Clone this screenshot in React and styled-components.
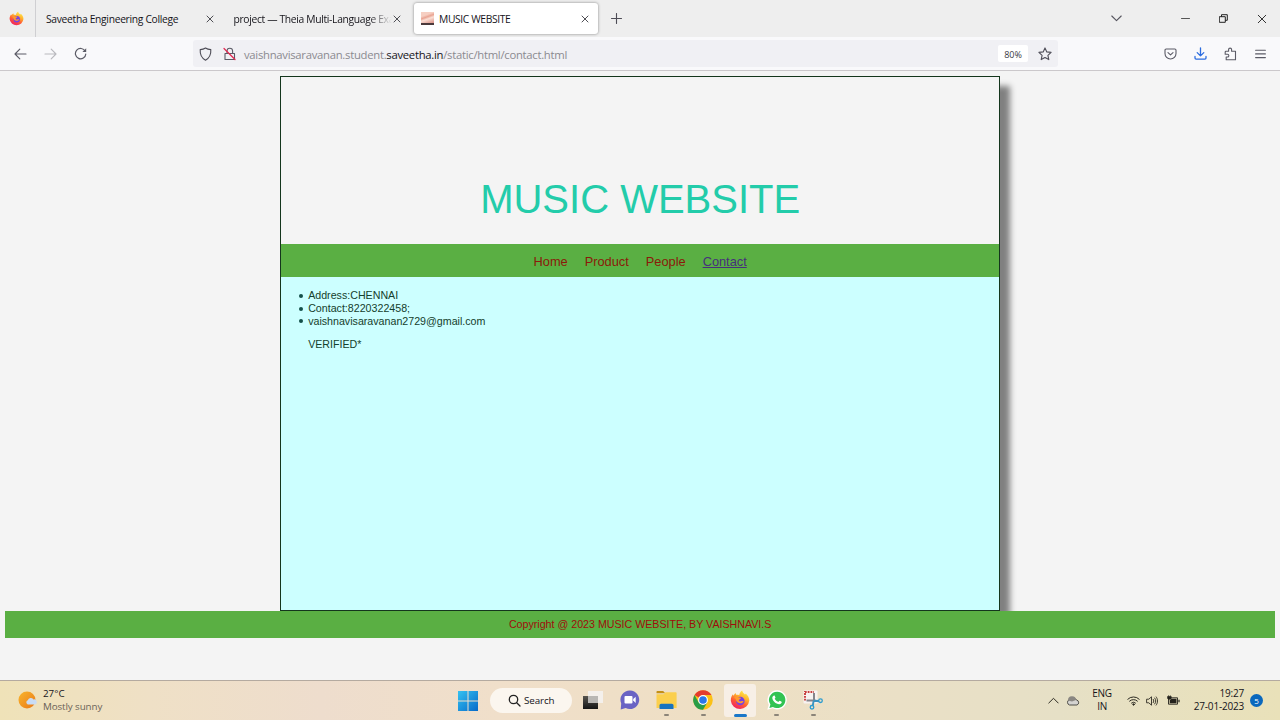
import React from "react";
import styled, { createGlobalStyle, css } from "styled-components";

const Global = createGlobalStyle`
  *, *::before, *::after { box-sizing: border-box; }
  html, body { margin: 0; padding: 0; overflow: hidden; }
  body { background: #f4f4f4; }
  svg { display: block; flex: none; }
`;

const Screen = styled.div`
  width: 1280px;
  height: 720px;
  display: flex;
  flex-direction: column;
  overflow: hidden;
  background: #f4f4f4;
  font-family: "Open Sans", "Noto Sans", sans-serif;
  color: #15141a;
`;

/* ---------- browser chrome ---------- */
const TabStrip = styled.div`
  height: 37px;
  flex: none;
  display: flex;
  align-items: center;
  background: #eeeeee;
`;

const PinnedTab = styled.div`
  width: 36px;
  height: 37px;
  display: flex;
  align-items: center;
  padding-left: 9px;
  border-right: 1px solid #cfcfd2;
`;

const Tab = styled.div`
  width: ${(p) => p.$w}px;
  height: 31px;
  display: flex;
  align-items: center;
  padding: 0 9px 0 ${(p) => p.$pad}px;
  ${(p) =>
    p.$active &&
    css`
      background: #fff;
      border-radius: 3px;
      box-shadow: 0 0 3px rgba(0, 0, 0, 0.45);
    `}
`;

const TabTitle = styled.span`
  flex: 1;
  min-width: 0;
  white-space: nowrap;
  font-size: 10.3px;
  line-height: 16px;
  letter-spacing: ${(p) => p.$ls || 0}px;
  ${(p) =>
    p.$fade &&
    css`
      mask-image: linear-gradient(to right, #000 calc(100% - 24px), transparent calc(100% - 1px));
    `}
`;

const Thumb = styled.span`
  width: 13px;
  height: 13px;
  margin-right: 5px;
  border-bottom: 2px solid #4a3a3c;
  background: linear-gradient(160deg, #f6cfc2 0 30%, #e9a493 45%, #fbe0d6 60%, #d98f84);
`;

const Spacer = styled.span`
  flex: ${(p) => (p.$w ? "none" : 1)};
  width: ${(p) => p.$w || 0}px;
`;

const Toolbar = styled.div`
  height: 34px;
  flex: none;
  display: flex;
  align-items: center;
  background: #f9f9fb;
  border-bottom: 1px solid #cbc8cb;
`;

const UrlBar = styled.div`
  width: 865px;
  height: 27px;
  display: flex;
  align-items: center;
  padding: 0 6px;
  border-radius: 3px;
  background: #f0f0f4;
`;

const Address = styled.span`
  flex: 1;
  margin-left: 8px;
  padding-top: 2px;
  font-size: 11.3px;
  line-height: 18px;
  letter-spacing: -0.28px;
  white-space: nowrap;
  color: #8b8a90;
  b { font-weight: 400; color: #15141a; }
`;

const Zoom = styled.span`
  width: 30px;
  height: 17px;
  margin-right: 10px;
  border-radius: 2px;
  background: #fff;
  font-size: 9px;
  line-height: 19px;
  text-align: center;
  color: #3a3944;
`;

/* ---------- web page ---------- */
const Viewport = styled.div`
  height: 609px;
  flex: none;
  padding: 5px 5px 0 5.3px;
  background: #f4f4f4;
  font-family: "Liberation Sans", Arial, sans-serif;
`;

const Container = styled.div`
  width: 720px;
  height: 535px;
  margin: 0 auto;
  border: 1px solid #14361c;
  box-shadow: 10px 10px 6px #808080;
  background: #f4f4f4;
  display: flex;
  flex-direction: column;
`;

const Banner = styled.header`
  height: 166.5px;
  flex: none;
  display: flex;
  align-items: flex-end;
  justify-content: center;
  padding-bottom: 21.5px;
  font-size: 40px;
  line-height: 46px;
  color: #23ccaa;
`;

const Menu = styled.nav`
  height: 33.5px;
  flex: none;
  display: flex;
  align-items: center;
  justify-content: center;
  gap: 17px;
  padding-top: 3px;
  background: #5aaf43;
`;

const MenuLink = styled.a`
  font-size: 12.8px;
  line-height: 16px;
  color: ${(p) => (p.$current ? "#46307c" : "#8b1a0a")};
  text-decoration: ${(p) => (p.$current ? "underline" : "none")};
`;

const Content = styled.main`
  flex: 1;
  padding: 12px 0 0 27px;
  background: #ccffff;
  color: #14402c;
  font-size: 10.67px;
  line-height: 12.8px;
`;

const Details = styled.ul`
  margin: 0;
  padding: 0;
  list-style: none;
`;

const Detail = styled.li`
  display: flex;
  align-items: center;
  &::before {
    content: "";
    width: 4px;
    height: 4px;
    margin: 1px 5px 0 -9px;
    border-radius: 50%;
    background: #14504a;
  }
`;

const Verified = styled.p`
  margin: 10.5px 0 0;
`;

const Footer = styled.footer`
  position: relative;
  height: 26.5px;
  background: #5aaf43;
  color: #a00c0c;
  font-size: 10.67px;
  line-height: 26px;
  text-align: center;
`;

/* ---------- taskbar ---------- */
const Taskbar = styled.div`
  height: 40px;
  flex: none;
  display: flex;
  align-items: center;
  border-top: 1px solid #b4aaa0;
  background: linear-gradient(
    to right,
    #efe2b8 0,
    #efe0c6 150px,
    #eeddcd 320px,
    #f0dfca 500px,
    #eedfc4 720px,
    #ebe0c6 860px,
    #e6e0c6 1060px,
    #e9e1b9 1280px
  );
  font-size: 10px;
`;

const Weather = styled.div`
  width: 458px;
  display: flex;
  align-items: center;
  gap: 5px;
  padding-left: 18px;
`;

const Lines = styled.div`
  display: flex;
  flex-direction: column;
  align-items: ${(p) => p.$align || "flex-start"};
  margin-top: -1px;
  line-height: 13px;
  font-size: ${(p) => p.$size || 10}px;
  letter-spacing: ${(p) => p.$ls || 0}px;
  white-space: nowrap;
`;

const Muted = styled.span`
  color: #6a6258;
  letter-spacing: -0.1px;
`;

const SearchPill = styled.div`
  width: 82px;
  height: 25px;
  margin: 0 3px 0 12px;
  padding-left: 18px;
  display: flex;
  align-items: center;
  gap: 3px;
  border-radius: 13px;
  background: #fbf6ef;
  font-size: 9.8px;
  letter-spacing: -0.1px;
`;

const TaskApp = styled.div`
  width: 36.7px;
  height: 34px;
  display: flex;
  flex-direction: column;
  align-items: center;
  padding-top: 6px;
  position: relative;
`;

const ActiveApp = styled(TaskApp)`
  width: 32px;
  height: 33px;
  margin: 0 2.3px;
  border-radius: 3px;
  background: #f7efe6;
`;

const Marker = styled.span`
  position: absolute;
  bottom: ${(p) => (p.$on ? 0.5 : 1.5)}px;
  width: ${(p) => (p.$on ? 13 : 5)}px;
  height: 2.4px;
  border-radius: 2px;
  background: ${(p) => (p.$on ? "#1a77c9" : "#8b8478")};
`;

const Tray = styled.div`
  flex: 1;
  display: flex;
  align-items: center;
  justify-content: flex-end;
  padding-right: 17px;
`;

const Badge = styled.span`
  width: 13px;
  height: 13px;
  margin-left: 6px;
  border-radius: 50%;
  background: #0a68bd;
  color: #fff;
  font-size: 8px;
  line-height: 13px;
  text-align: center;
`;

/* ---------- icons ---------- */
const Line = ({ w, h, vb, c = "#5b5b66", s = 1.1, children }) => (
  <svg width={w} height={h} viewBox={vb || `0 0 ${w} ${h}`} fill="none" stroke={c} strokeWidth={s} strokeLinecap="round" strokeLinejoin="round">
    {children}
  </svg>
);

const Close = ({ size = 8, c = "#3b3b42", s = 0.9 }) => (
  <Line w={size} h={size} vb="0 0 8 8" c={c} s={s}>
    <path d="M1 1l6 6M7 1l-6 6" />
  </Line>
);

const Firefox = ({ size, id }) => (
  <svg width={size} height={size} viewBox="0 0 20 20">
    <defs>
      <linearGradient id={id} x1="0.8" y1="0.05" x2="0.3" y2="1">
        <stop offset="0" stopColor="#fff04f" />
        <stop offset="0.35" stopColor="#ffb02e" />
        <stop offset="0.65" stopColor="#ff5a36" />
        <stop offset="1" stopColor="#ee1d65" />
      </linearGradient>
    </defs>
    <path d="M12.2 0.6c.2 2 1.5 2.800 2.700 3.900.6-.1 .8-.6.8-1 2 1.700 3.600 4.200 3.600 7.100A9.300 9.300 0 0 1 .8 10.700C.7 7.700 1.900 5.500 3 4.300c0 .6.1 1.100.4 1.500C4 4.500 4.700 3.600 5.800 2.900c0 .8.2 1.500.7 2 1.200-.1 2 .1 2.700.4C9.500 3.400 10.600 1.500 12.200.6z" fill={`url(#${id})`} />
    <circle cx="10.300" cy="11" r="4.300" fill="#7542e5" />
    <path d="M4 7.500c1.500-1.200 3.500-1 5.200-.1 1 .1 1.800.1 1.900.6-.2.900-1.800 1-2.200 2-.1 1 .9 1.700 2.200 1.300 1-.3 1.700-.5 2.500.1-1 1.600-2.700 2.200-4.400 1.700-2.200-.5-3.500-2.300-3.300-4z" fill="#ff9a2c" />
  </svg>
);

const Back = ({ c, flip }) => (
  <Line w={13} h={12} c={c} s={1.15}>
    <path d={flip ? "M1 6h11M7.200 1.200L12 6l-4.800 4.800" : "M12 6H1M5.800 1.200L1 6l4.800 4.800"} />
  </Line>
);

const Reload = () => (
  <Line w={13} h={13} s={1.2}>
    <path d="M11.200 4.200A5.200 5.200 0 1 0 11.800 7" />
    <path d="M12.200 1.200v3.800H8.400z" fill="#5b5b66" stroke="none" />
  </Line>
);

const Shield = () => (
  <Line w={13} h={14} c="#4d4c56">
    <path d="M6.500 1c1.500 1 3.500 1.500 5.300 1.600.3 4.500-.8 8.100-5.300 10.600C2 10.700.9 7.100 1.200 2.600 3 2.500 5 2 6.500 1z" />
  </Line>
);

const Lock = () => (
  <Line w={13} h={14} c="#5b5b66">
    <path d="M2 6.500h9.500v6H2zM4 6.500V4a2.800 2.800 0 0 1 5.600 0v2.500" />
    <path d="M1 1.500l11 11" stroke="#e22850" strokeWidth="1.200" />
  </Line>
);

const Star = () => (
  <Line w={14} h={14} c="#4f4e58">
    <path d="M7 .9l1.800 4 4.300.5-3.200 2.900.9 4.300L7 10.500l-3.800 2.100.9-4.300L.9 5.400l4.300-.5z" />
  </Line>
);

const Pocket = () => (
  <Line w={13} h={12}>
    <path d="M2.200 1h8.600c.8 0 1.200.5 1.200 1.200v3.300a5.500 5.500 0 0 1-11 0V2.200C1 1.500 1.400 1 2.200 1z" />
    <path d="M4 4.600l2.500 2.300L9 4.600" />
  </Line>
);

const Download = () => (
  <Line w={13} h={13} c="#2b6cdf" s={1.3}>
    <path d="M6.500 .8v8M3.200 5.600l3.300 3.300 3.300-3.300M1 9.500v1.600c0 .7.400 1.100 1.100 1.100h8.800c.7 0 1.100-.4 1.100-1.100V9.500" />
  </Line>
);

const Puzzle = () => (
  <Line w={13} h={14}>
    <path d="M2 4.200h2.600V2.600a1.500 1.500 0 0 1 3 0v1.600h3.900v8.600H2.200V10h1.300a1.300 1.300 0 0 0 0-2.700H1.200V5c0-.5.300-.8.800-.8z" />
  </Line>
);

const WindowsLogo = () => (
  <svg width="20" height="20" viewBox="0 0 20 20">
    <defs>
      <linearGradient id="win" x1="0" y1="0" x2="1" y2="1">
        <stop offset="0" stopColor="#35c2f1" />
        <stop offset="1" stopColor="#0669c9" />
      </linearGradient>
    </defs>
    <path d="M0 0h9.500v9.500H0zM10.500 0H20v9.500h-9.500zM0 10.500h9.500V20H0zM10.500 10.500H20V20h-9.500z" fill="url(#win)" />
  </svg>
);

const TaskView = () => (
  <svg width="20" height="20" viewBox="0 0 20 20">
    <defs>
      <linearGradient id="tv" x1="0" y1="0" x2="0" y2="1">
        <stop offset="0" stopColor="#57544f" />
        <stop offset="1" stopColor="#151515" />
      </linearGradient>
    </defs>
    <path d="M0 6h15v13H0z" fill="url(#tv)" />
    <path d="M5 1h15v12H5z" fill="#f4f3f2" fillOpacity="0.85" />
    <path d="M5 6h10v7H5z" fill="#b9b7b4" />
  </svg>
);

const Chat = () => (
  <svg width="20" height="20" viewBox="0 0 20 20">
    <path d="M10.200.5a9.300 9.300 0 1 1-4.500 17.600L.7 19.500l.5-6A9.300 9.300 0 0 1 10.200.5z" fill="#6a63c4" />
    <rect x="4.500" y="6" width="8" height="7.500" rx="1" fill="#fff" />
    <path d="M13.200 9l2.500-2.300v6.200L13.200 10.500z" fill="#fff" />
  </svg>
);

const Folder = () => (
  <svg width="21" height="20" viewBox="0 0 21 20">
    <path d="M.5 2c0-.6.4-1 1-1h5.700l2 2.200H.5z" fill="#c48f15" />
    <path d="M.5 4.200h7.200L9.600 2.300h10.200c.5 0 .8.300.8.800v15H.5z" fill="#fbcf4d" />
    <path d="M3.500 19v-3.500c0-1 .7-1.700 1.700-1.700h10.600c1 0 1.700.7 1.700 1.700V19z" fill="#1873bf" />
  </svg>
);

const Chrome = () => (
  <svg width="20" height="20" viewBox="0 0 20 20">
    <circle cx="10" cy="10" r="9.800" fill="#fbc116" />
    <path d="M10 10L1.500 5.100A9.800 9.800 0 0 1 18.500 5.100H10z" fill="#e33b2e" />
    <path d="M1.500 5.100A9.800 9.800 0 0 0 10 19.800L14.300 12.500 10 10 5.700 12.400z" fill="#2a9d48" />
    <circle cx="10" cy="10" r="4.900" fill="#fff" />
    <circle cx="10" cy="10" r="3.800" fill="#2b76e8" />
  </svg>
);

const WhatsApp = () => (
  <svg width="20" height="20" viewBox="0 0 20 20">
    <path d="M10.200.3a9.600 9.600 0 1 1-4.700 18L.3 19.700l1.500-5A9.600 9.600 0 0 1 10.200.3z" fill="#fff" />
    <path d="M10.200 1.700a8.200 8.200 0 1 1-4.300 15.200l-3.500 1 1-3.400A8.200 8.200 0 0 1 10.200 1.700z" fill="#32c353" />
    <path d="M7.200 5.400c.4 0 .6.200 1.300 2.100 0 .4-.4.8-.8 1.300.8 1.500 2 2.500 3.600 3.200.5-.4.900-1.100 1.300-1.200.5 0 2.200.9 2.200 1.200 0 1.200-1.200 2.200-2.500 2.200-3.400-.1-7.100-3.700-7-6.500.1-1.300 1-2.300 1.900-2.300z" fill="#fff" />
  </svg>
);

const Snip = () => (
  <svg width="20" height="20" viewBox="0 0 20 20" fill="none">
    <rect x=".5" y=".5" width="14" height="13" rx="1" fill="#f7f2f1" />
    <path d="M2 10.500V2h9" stroke="#c83d3d" strokeWidth="1.900" strokeDasharray="1.800 1" />
    <path d="M11 3v8M3.500 10.600h9" stroke="#85858c" strokeWidth="2" />
    <path d="M10.700 10.500l-.9 5M11 10.700l5 .3" stroke="#3c93bf" strokeWidth="1.900" />
    <circle cx="9" cy="17.300" r="1.800" stroke="#2b9bcf" strokeWidth="1.300" />
    <circle cx="17.500" cy="10.700" r="1.800" stroke="#2b9bcf" strokeWidth="1.300" />
  </svg>
);

const Sun = () => (
  <svg width="20" height="20" viewBox="0 0 20 20">
    <defs>
      <linearGradient id="sun" x1="0" y1="0" x2="1" y2="1">
        <stop offset="0" stopColor="#f9b62c" />
        <stop offset="1" stopColor="#e97818" />
      </linearGradient>
    </defs>
    <circle cx="9" cy="9" r="8.500" fill="url(#sun)" />
    <path d="M9.800 13.500a2.300 2.300 0 0 1 0-4.300 3.100 3.100 0 0 1 5.600-.7 2.500 2.500 0 1 1 1.500 5z" fill="#c9dcf5" />
  </svg>
);

const Wifi = () => (
  <Line w={13} h={11} c="#2c2a22" s={1}>
    <path d="M.8 4.200a8 8 0 0 1 11.400 0M2.600 6.100a5.500 5.500 0 0 1 7.800 0M4.500 8a3 3 0 0 1 4 0" />
    <circle cx="6.500" cy="9.500" r=".7" fill="#2c2a22" />
  </Line>
);

const Volume = () => (
  <Line w={12} h={12} c="#2c2a22" s={0.9}>
    <path d="M1 4.200h1.800L5.500 1.800v8.400L2.800 7.800H1zM7.200 4.300c.8 1 .8 2.400 0 3.400M8.700 3c1.400 1.800 1.400 4.200 0 6M10.200 1.900c1.800 2.400 1.800 5.800 0 8.200" />
  </Line>
);

const Battery = () => (
  <svg width="13" height="12" viewBox="0 0 13 12">
    <path d="M1.500 2.800h9v6.400h-9z" fill="none" stroke="#24221c" strokeWidth=".9" />
    <path d="M2.700 7V5l2-1.200h4.800v4.400H2.700z" fill="#24221c" />
    <path d="M12 4.800v2.500" stroke="#24221c" strokeWidth="1.200" />
    <path d="M.6 1.500h3.600v1.700c0 1.500-3.600 1.500-3.600 0zM1.500 .3v1.400M3.300 .3v1.400" fill="#24221c" stroke="#24221c" strokeWidth=".7" />
  </svg>
);

const Cloud = () => (
  <svg width="14" height="10" viewBox="0 0 14 10">
    <path d="M3.500 9a2.800 2.800 0 0 1-.2-5.300 4 4 0 0 1 7.100.3A2.600 2.600 0 0 1 11 9z" fill="#d4d3d0" stroke="#403e3a" strokeWidth=".9" />
    <path d="M2 4.500a4 4 0 0 1 8-.5L6 5.500z" fill="#8a8782" />
  </svg>
);

const links = ["Home", "Product", "People", "Contact"];
const details = ["Address:CHENNAI", "Contact:8220322458;", "vaishnavisaravanan2729@gmail.com"];

export default function App() {
  return (
    <Screen>
      <Global />
      <TabStrip>
        <PinnedTab><Firefox size={15} id="ff-tab" /></PinnedTab>
        <Tab $w={187} $pad={10}>
          <TabTitle $ls={-0.31}>Saveetha Engineering College</TabTitle>
          <Close />
        </Tab>
        <Tab $w={187} $pad={10.5}>
          <TabTitle $fade $ls={-0.33}>project — Theia Multi-Language Exa</TabTitle>
          <Close />
        </Tab>
        <Spacer $w={4} />
        <Tab $w={184} $pad={7} $active>
          <Thumb />
          <TabTitle $ls={-0.38}>MUSIC WEBSITE</TabTitle>
          <Close />
        </Tab>
        <Spacer $w={13} />
        <Line w={11} h={11} c="#4d4c56" s={1.1}><path d="M5.500 .5v10M.5 5.500h10" /></Line>
        <Spacer />
        <Line w={11} h={7} c="#55545e"><path d="M.8 1l4.700 4.600L10.200 1" /></Line>
        <Spacer $w={59} />
        <Line w={9} h={3} c="#555" s={1}><path d="M.5 1.500h8" /></Line>
        <Spacer $w={29} />
        <Line w={9} h={9} c="#222" s={1}><path d="M.7 2.700h5.600v5.600H.7zM2.500 2.500V.7h5.800v5.600H6.500" /></Line>
        <Spacer $w={28.5} />
        <Close size={10} c="#333" s={0.8} />
        <Spacer $w={13.5} />
      </TabStrip>

      <Toolbar>
        <Spacer $w={13.5} />
        <Back c="#5b5b66" />
        <Spacer $w={17} />
        <Back c="#b9b9be" flip />
        <Spacer $w={17} />
        <Reload />
        <Spacer />
        <UrlBar>
          <Shield />
          <Spacer $w={11} />
          <Lock />
          <Address>vaishnavisaravanan.student.<b>saveetha.in</b>/static/html/contact.html</Address>
          <Zoom>80%</Zoom>
          <Star />
        </UrlBar>
        <Spacer $w={105.5} />
        <Pocket />
        <Spacer $w={17} />
        <Download />
        <Spacer $w={17.5} />
        <Puzzle />
        <Spacer $w={18} />
        <Line w={11} h={10}><path d="M.6 1.200h9.800M.6 4.900h9.800M.6 8.600h9.800" /></Line>
        <Spacer $w={14} />
      </Toolbar>

      <Viewport>
        <Container>
          <Banner>MUSIC WEBSITE</Banner>
          <Menu>
            {links.map((l) => (
              <MenuLink key={l} $current={l === "Contact"}>{l}</MenuLink>
            ))}
          </Menu>
          <Content>
            <Details>
              {details.map((d) => <Detail key={d}>{d}</Detail>)}
            </Details>
            <Verified>VERIFIED*</Verified>
          </Content>
        </Container>
        <Footer>Copyright @ 2023 MUSIC WEBSITE, BY VAISHNAVI.S</Footer>
      </Viewport>

      <Taskbar>
        <Weather>
          <Sun />
          <Lines $size={9.8}>
            <span>27°C</span>
            <Muted>Mostly sunny</Muted>
          </Lines>
        </Weather>
        <WindowsLogo />
        <SearchPill>
          <Line w={13} h={13} c="#222" s={1.3}><circle cx="5.500" cy="5.500" r="4.200" /><path d="M8.700 8.700l3.300 3.300" /></Line>
          Search
        </SearchPill>
        <TaskApp><TaskView /></TaskApp>
        <TaskApp><Chat /></TaskApp>
        <TaskApp><Folder /><Marker /></TaskApp>
        <TaskApp><Chrome /><Marker /></TaskApp>
        <ActiveApp><Firefox size={20} id="ff-task" /><Marker $on /></ActiveApp>
        <TaskApp><WhatsApp /><Marker /></TaskApp>
        <TaskApp><Snip /><Marker /></TaskApp>
        <Tray>
          <Line w={11} h={7} c="#2c2a22" s={1}><path d="M.8 6l4.700-4.700L10.200 6" /></Line>
          <Spacer $w={7.5} />
          <Cloud />
          <Spacer $w={12} />
          <Lines $align="center" $ls={-0.3}><span>ENG</span><span>IN</span></Lines>
          <Spacer $w={15} />
          <Wifi />
          <Spacer $w={6.5} />
          <Volume />
          <Spacer $w={8.5} />
          <Battery />
          <Spacer $w={14} />
          <Lines $align="flex-end" $ls={-0.2}><span>19:27</span><span>27-01-2023</span></Lines>
          <Badge>5</Badge>
        </Tray>
      </Taskbar>
    </Screen>
  );
}
